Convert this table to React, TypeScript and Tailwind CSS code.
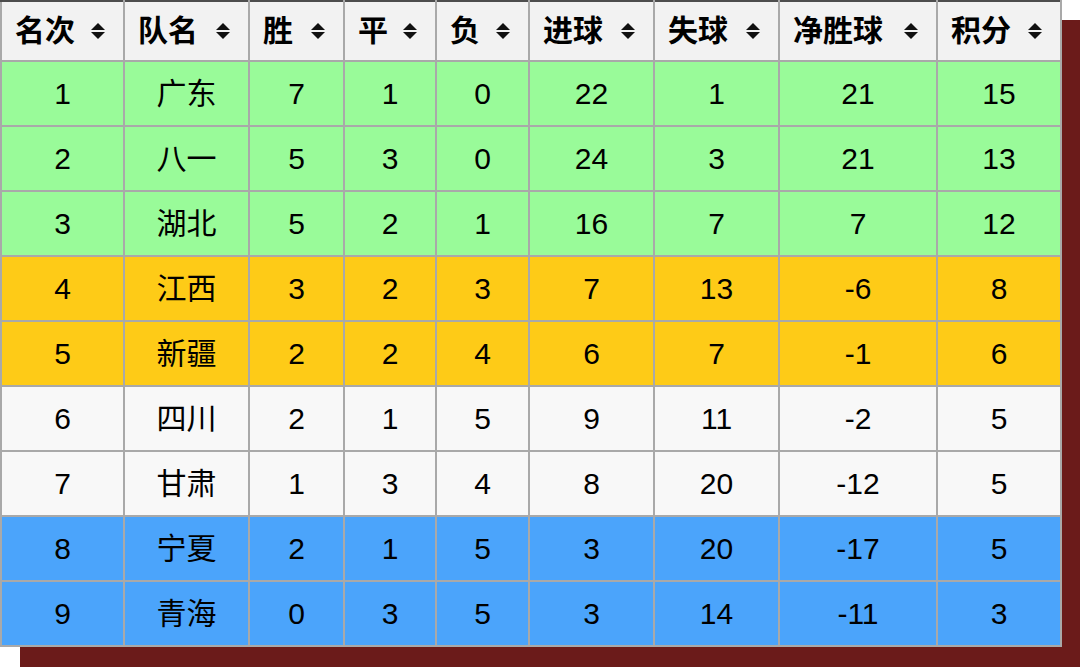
const headers = ["名次", "队名", "胜", "平", "负", "进球", "失球", "净胜球", "积分"];
const widths = ["w-[123px]", "w-[125px]", "w-[95px]", "w-[92px]", "w-[93px]", "w-[125px]", "w-[125px]", "w-[158px]", "w-[124px]"];

const rows = [
  { cells: ["1", "广东", "7", "1", "0", "22", "1", "21", "15"], bg: "bg-[#99fb99]" },
  { cells: ["2", "八一", "5", "3", "0", "24", "3", "21", "13"], bg: "bg-[#99fb99]" },
  { cells: ["3", "湖北", "5", "2", "1", "16", "7", "7", "12"], bg: "bg-[#99fb99]" },
  { cells: ["4", "江西", "3", "2", "3", "7", "13", "-6", "8"], bg: "bg-[#fecb17]" },
  { cells: ["5", "新疆", "2", "2", "4", "6", "7", "-1", "6"], bg: "bg-[#fecb17]" },
  { cells: ["6", "四川", "2", "1", "5", "9", "11", "-2", "5"], bg: "bg-[#f8f8f8]" },
  { cells: ["7", "甘肃", "1", "3", "4", "8", "20", "-12", "5"], bg: "bg-[#f8f8f8]" },
  { cells: ["8", "宁夏", "2", "1", "5", "3", "20", "-17", "5"], bg: "bg-[#4ba4fb]" },
  { cells: ["9", "青海", "0", "3", "5", "3", "14", "-11", "3"], bg: "bg-[#4ba4fb]" },
];

// stacked up/down triangles, as on a sortable table head
function SortIcon() {
  return (
    <svg viewBox="0 0 14 16" className="h-[16px] w-[14px] shrink-0">
      <path d="M7 0 L14 7 L0 7 Z" fill="#111" />
      <path d="M0 9 L14 9 L7 16 Z" fill="#111" />
    </svg>
  );
}

export default function App() {
  return (
    <div className="min-h-[669px] w-[1080px] bg-white font-['Liberation_Sans','Noto_Sans_CJK_SC',sans-serif]">
      <table className="table-fixed border-collapse border-2 border-[#4d4d4d] text-black shadow-[20px_20px_0_#6b1b1a]">
        <colgroup>
          {widths.map((w, i) => (
            <col key={i} className={w} />
          ))}
        </colgroup>
        <thead>
          <tr className="h-[60px] bg-[#f2f2f2]">
            {headers.map((h) => (
              <th key={h} className="border-2 border-[#a9a9a9] border-t-[#4d4d4d] pl-[13px] pr-[18px] text-left">
                <div className="flex items-center justify-between">
                  <span className="text-[30px] font-bold leading-none">{h}</span>
                  <SortIcon />
                </div>
              </th>
            ))}
          </tr>
        </thead>
        <tbody>
          {rows.map((r) => (
            <tr key={r.cells[0]} className={`h-[65px] ${r.bg}`}>
              {r.cells.map((c, i) => (
                <td key={i} className="border-2 border-[#a9a9a9] text-center text-[30px] leading-none">
                  {c}
                </td>
              ))}
            </tr>
          ))}
        </tbody>
      </table>
    </div>
  );
}
